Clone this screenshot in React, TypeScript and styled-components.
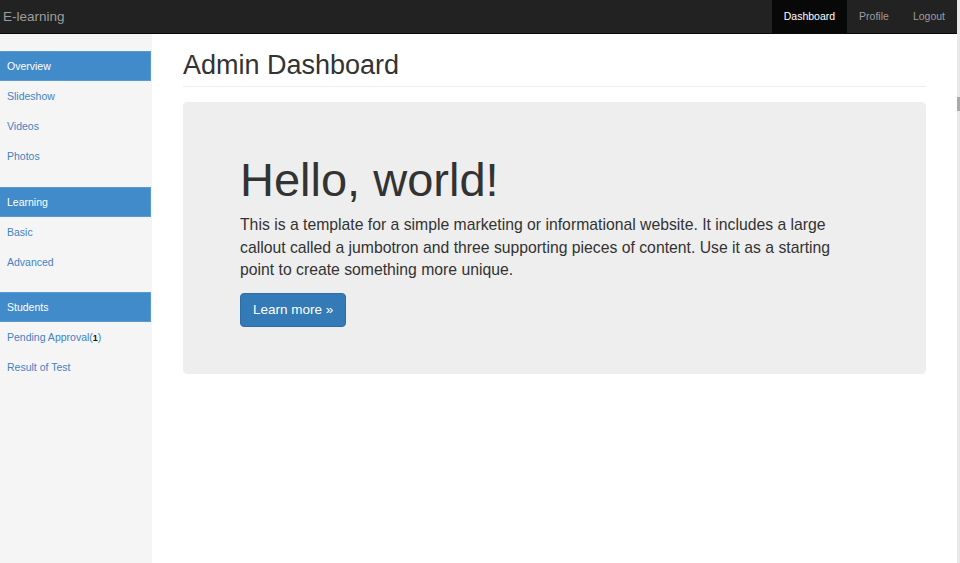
import React from "react";
import styled, { createGlobalStyle } from "styled-components";

const GlobalStyle = createGlobalStyle`
  html, body { margin: 0; padding: 0; height: 100%; overflow: hidden; }
  body {
    font-family: "Liberation Sans", Arial, Helvetica, sans-serif;
    color: #333;
    background: #fff;
  }
  #root { height: 100%; }
`;

const Shell = styled.div`
  display: flex;
  height: 100vh;
`;

const Page = styled.div`
  flex: 1;
  display: flex;
  flex-direction: column;
  min-width: 0;
`;

const Scrollbar = styled.div`
  width: 3px;
  background: #e8e8e8;
  display: flex;
  flex-direction: column;
  padding-top: 97px;
`;

const Thumb = styled.div`
  height: 14px;
  background: #a9a9a9;
`;

const Navbar = styled.nav`
  height: 33px;
  background: #222;
  border-bottom: 1px solid #080808;
  display: flex;
  align-items: stretch;
  justify-content: space-between;
  flex-shrink: 0;
`;

const Brand = styled.a`
  display: flex;
  align-items: center;
  padding: 0 0 1px 3px;
  font-size: 13.5px;
  color: #9d9d9d;
  text-decoration: none;
`;

const NavList = styled.ul`
  list-style: none;
  margin: 0;
  padding: 0;
  display: flex;
`;

const NavItem = styled.li<{ $active?: boolean }>`
  display: flex;
  align-items: center;
  padding: 0 12px 1px;
  font-size: 10.5px;
  color: ${(p) => (p.$active ? "#fff" : "#9d9d9d")};
  background: ${(p) => (p.$active ? "#080808" : "transparent")};
`;

const Body = styled.div`
  flex: 1;
  display: flex;
  min-height: 0;
`;

const Sidebar = styled.aside`
  width: 152px;
  background: #f5f5f5;
  padding-top: 17px;
  flex-shrink: 0;
`;

const SideGroup = styled.ul`
  list-style: none;
  margin: 0 0 15.5px;
  padding: 0;
`;

const SideHeader = styled.li`
  height: 28px;
  display: flex;
  align-items: center;
  padding-left: 7px;
  background: #428bca;
  border: 1px solid #5a9ad3;
  border-left: none;
  margin-right: 1px;
  color: #fff;
  font-size: 10.5px;
`;

const SideLink = styled.li`
  height: 30px;
  display: flex;
  align-items: center;
  padding-left: 7px;
  color: #4382c4;
  font-size: 10.5px;
`;

const Badge = styled.b`
  color: #111;
  font-size: 9px;
`;

const Main = styled.main`
  flex: 1;
  padding: 17px 31px 0;
  min-width: 0;
`;

const PageHeader = styled.div`
  border-bottom: 1px solid #eee;
  padding-bottom: 5px;
  margin-bottom: 15px;
`;

const Title = styled.h1`
  margin: 0;
  font-size: 27px;
  line-height: 29.7px;
  font-weight: 500;
  color: #333;
`;

const Jumbotron = styled.section`
  background: #eee;
  border-radius: 4.5px;
  padding: 52px 63px 36px 57px;
`;

const Hero = styled.h1`
  margin: 0 0 9px;
  font-size: 47px;
  line-height: 51.7px;
  font-weight: 500;
  color: #333;
`;

const Lead = styled.p`
  margin: 0 0 11.25px;
  font-size: 15.75px;
  line-height: 22.5px;
  color: #333;
`;

const Button = styled.a`
  display: inline-block;
  padding: 7px 12px;
  font-size: 13.5px;
  line-height: 18px;
  color: #fff;
  background: #337ab7;
  border: 1px solid #2e6da4;
  border-radius: 4px;
  text-decoration: none;
`;

const groups = [
  { title: "Overview", links: ["Slideshow", "Videos", "Photos"] },
  { title: "Learning", links: ["Basic", "Advanced"] },
  { title: "Students", links: ["Pending Approval", "Result of Test"] },
];

export default function App() {
  return (
    <>
      <GlobalStyle />
      <Shell>
        <Page>
          <Navbar>
            <Brand href="#">E-learning</Brand>
            <NavList>
              <NavItem $active>Dashboard</NavItem>
              <NavItem>Profile</NavItem>
              <NavItem>Logout</NavItem>
            </NavList>
          </Navbar>
          <Body>
            <Sidebar>
              {groups.map((g) => (
                <SideGroup key={g.title}>
                  <SideHeader>{g.title}</SideHeader>
                  {g.links.map((l) => (
                    <SideLink key={l}>
                      {l === "Pending Approval" ? (
                        <span>
                          Pending Approval(<Badge>1</Badge>)
                        </span>
                      ) : (
                        l
                      )}
                    </SideLink>
                  ))}
                </SideGroup>
              ))}
            </Sidebar>
            <Main>
              <PageHeader>
                <Title>Admin Dashboard</Title>
              </PageHeader>
              <Jumbotron>
                <Hero>Hello, world!</Hero>
                <Lead>
                  This is a template for a simple marketing or informational website. It includes a
                  large callout called a jumbotron and three supporting pieces of content. Use it as a
                  starting point to create something more unique.
                </Lead>
                <Lead>
                  <Button href="#">Learn more »</Button>
                </Lead>
              </Jumbotron>
            </Main>
          </Body>
        </Page>
        <Scrollbar>
          <Thumb />
        </Scrollbar>
      </Shell>
    </>
  );
}
